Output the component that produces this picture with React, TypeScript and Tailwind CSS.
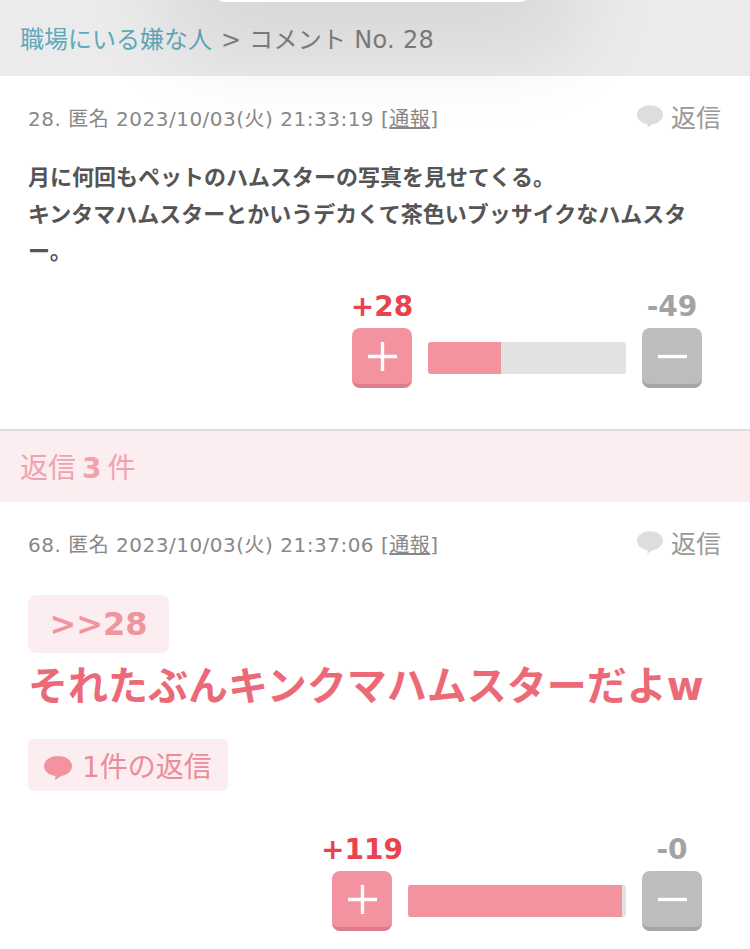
const FONT = "font-['DejaVu_Sans','Noto_Sans_CJK_JP',sans-serif]"

function Bubble({ className }: { className: string }) {
  return (
    <svg viewBox="0 0 28 24" className={className} fill="currentColor">
      <path d="M14 0C6.300 0 0 4.300 0 10c0 5.200 5 9.300 11.500 10L11 24l6.300-4C23.500 19.200 28 15 28 10 28 4.300 21.700 0 14 0z" />
    </svg>
  )
}

function Meta({ no, time }: { no: number; time: string }) {
  return (
    <div className="flex items-center justify-between h-[36px] pr-[1px]">
      <p className="text-[20px] tracking-[0.5px] text-[#888888] whitespace-nowrap">
        {no}. 匿名 {time} [<span className="underline">通報</span>]
      </p>
      <div className="flex items-center gap-[8px] text-[25px] text-[#999999]">
        <Bubble className="w-[26px] h-[23px] text-[#dddddd] -mt-[6px]" />
        返信
      </div>
    </div>
  )
}

function Vote({ plus, minus, pct, barClass }: { plus: number; minus: number; pct: number; barClass: string }) {
  return (
    <div className="flex items-end justify-end gap-[16px] pr-[20px]">
      <div className="flex flex-col items-center w-[60px]">
        <span className="text-[28px] font-bold leading-[42px] text-[#e8434f] whitespace-nowrap">+{plus}</span>
        <button className="w-[60px] h-[60px] rounded-[8px] bg-[#f3939f] border-b-[4px] border-[#dd7d89] text-white flex items-center justify-center">
          <svg viewBox="0 0 30 30" className="w-[29px] h-[29px]" stroke="currentColor" strokeWidth="3.5" fill="none">
            <path d="M0 15h30M15 0v30" />
          </svg>
        </button>
      </div>
      <div className={`h-[32px] mb-[14px] rounded-[3px] bg-[#e2e2e2] overflow-hidden ${barClass}`}>
        <div className="h-full bg-[#f3939f]" style={{ width: `${pct}%` }} />
      </div>
      <div className="flex flex-col items-center w-[60px]">
        <span className="text-[28px] font-bold leading-[42px] text-[#a3a3a3] whitespace-nowrap">-{minus}</span>
        <button className="w-[60px] h-[60px] rounded-[8px] bg-[#bdbdbd] border-b-[4px] border-[#a5a5a5] text-white flex items-center justify-center">
          <svg viewBox="0 0 30 30" className="w-[29px] h-[29px]" stroke="currentColor" strokeWidth="3.5" fill="none">
            <path d="M0 15h30" />
          </svg>
        </button>
      </div>
    </div>
  )
}

export default function App() {
  return (
    <div className={`relative w-[750px] h-[949px] overflow-hidden bg-white ${FONT}`}>
      <div className="absolute top-[-8px] left-[215px] w-[315px] h-[10px] rounded-b-[10px] bg-white shadow-[0_0_90px_45px_rgba(0,0,0,0.1)] z-10" />

      <header className="h-[76px] bg-[#ebebeb] flex items-center px-[20px] pt-[4px] text-[24px] text-[#808080]">
        <span className="text-[#5ea9bb]">職場にいる嫌な人</span>
        <span className="ml-[9px]">&gt;</span>
        <span className="ml-[8px] tracking-[0.3px]">コメント No. 28</span>
      </header>

      <section className="h-[353px] pl-[28px] pr-[28px] pt-[25px]">
        <Meta no={28} time="2023/10/03(火) 21:33:19" />
        <p className="mt-[22px] text-[22px] leading-[37px] font-bold text-[#555555]">
          月に何回もペットのハムスターの写真を見せてくる。
          <br />
          キンタマハムスターとかいうデカくて茶色いブッサイクなハムスター。
        </p>
        <div className="mt-[16px]">
          <Vote plus={28} minus={49} pct={37} barClass="w-[198px]" />
        </div>
      </section>

      <div className="h-[73px] bg-[#fcedf0] border-t-[2px] border-[#e0dcdc] flex items-center px-[20px] pt-[5px] text-[28px] text-[#f0a3ae]">
        返信<b className="ml-[6px]">3</b>
        <span className="ml-[6px]">件</span>
      </div>

      <section className="pl-[28px] pr-[28px] pt-[25px]">
        <Meta no={68} time="2023/10/03(火) 21:37:06" />
        <div className="mt-[32px] w-[141px] h-[58px] rounded-[8px] bg-[#fcedf0] flex items-center justify-center text-[32px] font-bold text-[#f0949f]">
          &gt;&gt;28
        </div>
        <p className="mt-[4px] text-[40px] leading-[58px] font-bold text-[#ec6a78] whitespace-nowrap">
          それたぶんキンクマハムスターだよw
        </p>
        <div className="mt-[24px] w-[200px] h-[52px] rounded-[6px] bg-[#fcedf0] flex items-center pl-[16px] pt-[6px] gap-[10px] text-[28px] text-[#ec8c98]">
          <Bubble className="w-[28px] h-[24px] text-[#f3939f]" />
          1件の返信
        </div>
        <div className="mt-[38px]">
          <Vote plus={119} minus={0} pct={98} barClass="w-[218px]" />
        </div>
      </section>
    </div>
  )
}
